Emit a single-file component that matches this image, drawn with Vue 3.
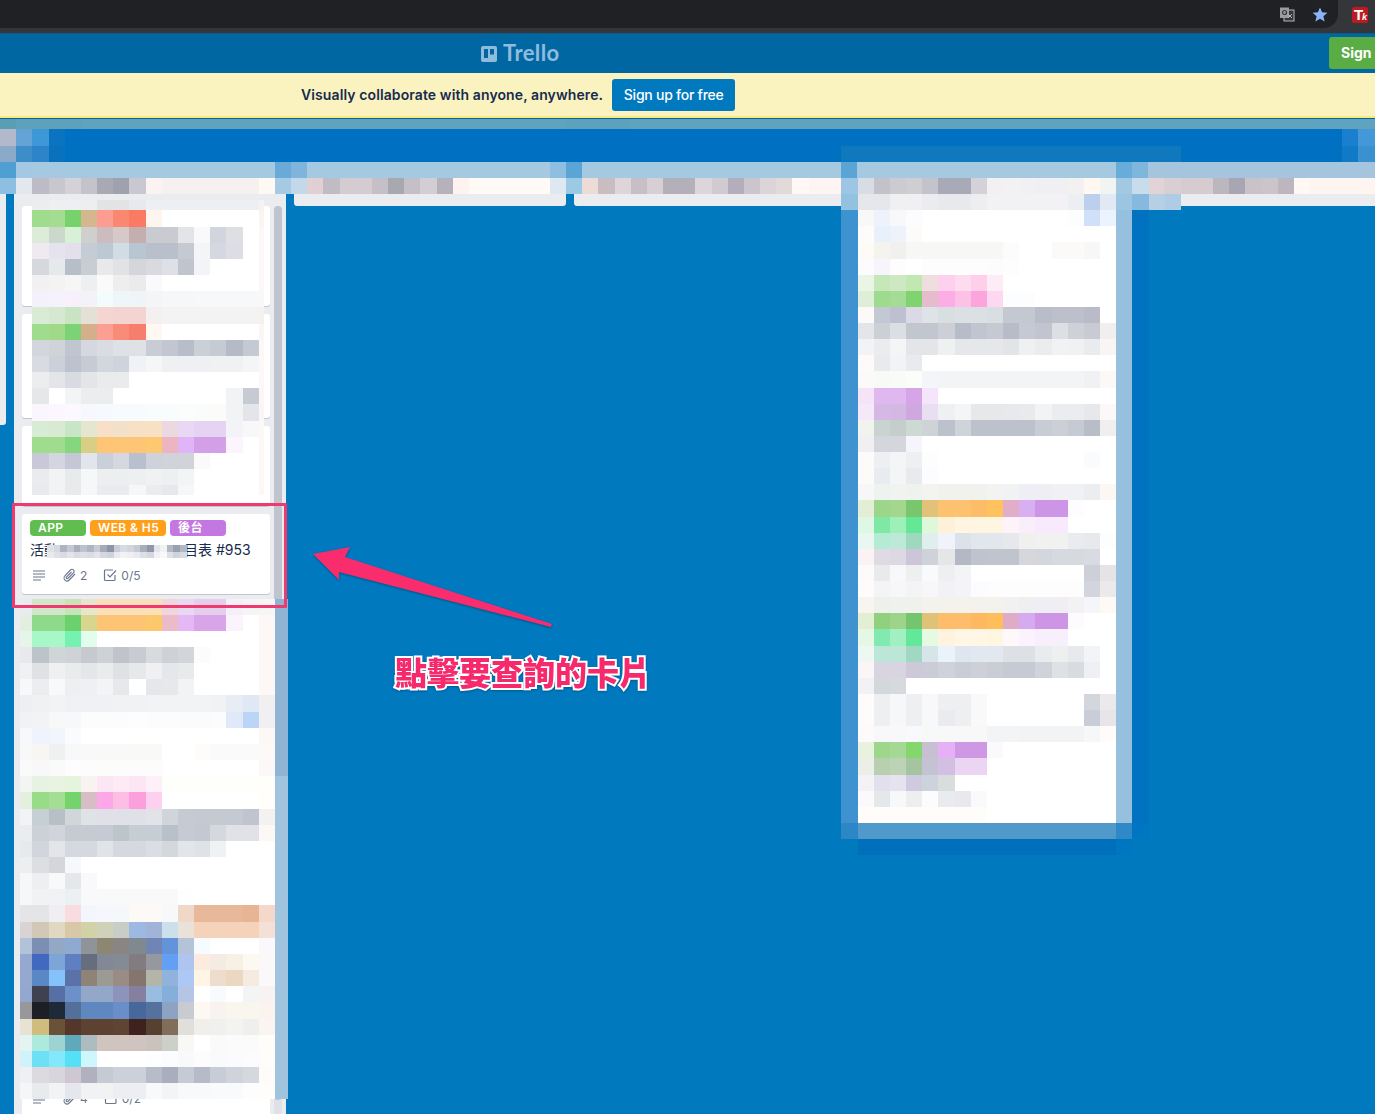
<template>
  <div class="page">
    <div class="chrome">
      <div class="omnibox">
        <svg class="ico-translate" width="16" height="15" viewBox="0 0 16 15">
          <rect x="5" y="3" width="10" height="11" fill="#35363a" stroke="#b4b6b8" stroke-width="1" />
          <rect x="1" y="0.5" width="9" height="10.5" fill="#9b9c9e" />
          <circle cx="5.5" cy="5.5" r="2" fill="none" stroke="#35363a" stroke-width="1.2" />
          <path d="M9 7l4 4M13 7l-4 4" stroke="#b4b6b8" stroke-width="1" />
        </svg>
        <svg width="16" height="15" viewBox="0 0 16 15">
          <polygon points="8,0.5 10.1,5.2 15.4,5.7 11.4,9.2 12.6,14.4 8,11.7 3.4,14.4 4.6,9.2 0.6,5.7 5.9,5.2" fill="#8ab4f8" />
        </svg>
      </div>
      <div class="ext-icon">T<span>k</span></div>
    </div>

    <header class="topbar">
      <div class="logo">
        <svg width="16" height="16" viewBox="0 0 16 16">
          <path fill-rule="evenodd" d="M2 0h12a2 2 0 0 1 2 2v12a2 2 0 0 1-2 2H2a2 2 0 0 1-2-2V2a2 2 0 0 1 2-2zm1 3v9h4V3H3zm6 0v5.500h4V3H9z" fill="#8fbcdc" />
        </svg>
        <span>Trello</span>
      </div>
      <button class="sign">Sign</button>
    </header>

    <div class="banner">
      <span class="banner-text">Visually collaborate with anyone, anywhere.</span>
      <button class="banner-btn">Sign up for free</button>
    </div>

    <main class="board">
      <section class="list list-prev"></section>

      <section class="list list-main">
        <div class="list-title"></div>
        <div class="cards">
          <div class="card" v-for="h in blankCards" :key="h" :style="{ height: h + 'px' }"></div>

          <div class="card card-open">
            <div class="labels">
              <span class="label green">APP</span>
              <span class="label orange">WEB &amp; H5</span>
              <span class="label purple">後台</span>
            </div>
            <div class="card-title">活動<span class="title-gap"></span>目表 #953</div>
            <div class="badges">
              <svg width="14" height="14" viewBox="0 0 14 14"><path d="M1 3h12M1 6h12M1 9h12M1 12h8" stroke="#6b778c" stroke-width="1.2" /></svg>
              <svg class="clip" width="14" height="14" viewBox="0 0 14 14"><path d="M13 6L7.200 12a3 3 0 0 1-4.300-4.200L8.500 2a2 2 0 0 1 2.900 2.800L5.800 10.500a1 1 0 0 1-1.400-1.400L9.500 4" fill="none" stroke="#6b778c" stroke-width="1.100" /></svg>
              <span class="num">2</span>
              <svg class="check" width="14" height="14" viewBox="0 0 14 14"><path d="M12 7v4.500a1 1 0 0 1-1 1H2.500a1 1 0 0 1-1-1V3a1 1 0 0 1 1-1H10" fill="none" stroke="#6b778c" stroke-width="1.200" /><path d="M4.500 6.500L7 9l6-6.500" fill="none" stroke="#6b778c" stroke-width="1.200" /></svg>
              <span class="num">0/5</span>
            </div>
          </div>

          <div class="card card-long">
            <div class="badges">
              <svg width="14" height="14" viewBox="0 0 14 14"><path d="M1 3h12M1 6h12M1 9h12M1 12h8" stroke="#6b778c" stroke-width="1.2" /></svg>
              <svg class="clip" width="14" height="14" viewBox="0 0 14 14"><path d="M13 6L7.200 12a3 3 0 0 1-4.300-4.200L8.500 2a2 2 0 0 1 2.900 2.800L5.800 10.500a1 1 0 0 1-1.400-1.400L9.500 4" fill="none" stroke="#6b778c" stroke-width="1.100" /></svg>
              <span class="num">4</span>
              <svg class="check" width="14" height="14" viewBox="0 0 14 14"><path d="M12 7v4.500a1 1 0 0 1-1 1H2.500a1 1 0 0 1-1-1V3a1 1 0 0 1 1-1H10" fill="none" stroke="#6b778c" stroke-width="1.200" /></svg>
              <span class="num">0/2</span>
            </div>
          </div>
        </div>
        <div class="scroll-track"><div class="scroll-thumb"></div></div>
      </section>

      <section class="list list-short"></section>
      <section class="list list-short"></section>
      <section class="list list-tall"></section>
      <section class="list list-short"></section>
    </main>

    <!-- pixelated parts of the screenshot -->
    <div
      v-for="(p, i) in patches"
      :key="i"
      class="mosaic"
      :style="{ left: p.x + 'px', top: p.y + 'px', gridTemplateColumns: p.columns, gridTemplateRows: p.heights }"
    >
      <i v-for="(c, k) in p.cells" :key="k" :style="{ background: '#' + c }"></i>
    </div>

    <!-- annotation drawn over the screenshot -->
    <div class="mark-box"></div>
    <svg class="mark-arrow" width="260" height="100" viewBox="0 0 260 100">
      <polygon points="3,24 40,17 35,27 242,94 241,97 29,42 29,50" fill="#f92c6d" />
    </svg>
    <div class="mark-text">點擊要查詢的卡片</div>
  </div>
</template>

<script setup>
const CELL = 16.18

const blankCards = [100, 104, 80]

const expand = (s) => s.split(' ').flatMap((t) => {
  const [c, n] = t.split('*')
  return Array(Number(n || 1)).fill(c)
})

const track = (n, first, last, size = CELL) => {
  const out = Array(n).fill(size)
  if (first) out[0] = first
  if (last) out[n - 1] = last
  return out.map((v) => v + 'px').join(' ')
}

const pad = (cells, n) => cells.concat(Array(Math.max(0, n - cells.length)).fill('fff'))

const topBand = [
  '5c9db6 5ea1bb*4 5fa3bc*30 5ca2bc*4 5fa3bc*40 5fa3bc*2 5ea3c0*4',
  'b3b9cc 63a3d5 3d98d8 0a74c0 0071c2*79 1a80cd 4498d8',
  '8aaac8 3d8dc8 2d84c8 0a72bc 0071c0*48 1078bc*21 0071c0*10 117ac6 3a91cf',
  '4f9fd2 a3c8e3 a5c9e1*15 6aaad8 7fb4dc a5c9e1*15 8fbfe0 5aa5d5 a5c9e1*16 5aa5d5 a5c9e1*16 68acd9 7fb6dc a5c5de*14',
  '8dc0e0 e3e7ee bdbcc6 c8c7cd d4d2d7 c4c3cb a9a9b6 a0a1ae c9c8d0 fbf3f1 f6f0ef*6 fff9f3 a5cbe4 c3d9ea e0d0d2 bfbcc4 d4ccd0 d4ccd0 c5c0c8 a8a8b0 c5c0c8 d2ced4 b5b2bb fef3ef fffaf6*5 dde8f2 9ccae5 eddbd6 c8bec2 ddd5d8 c8bfc6 d6d0d4 b4b0ba b4b0ba dcd6da d0cbd0 b2aebb cbc6cd dbd5d8 e2d9d9 fff8f5 fef5f2 fef5f2 9cc6e3 fff*16 a3c8e2 c9dceb e2d4d6 d8cfd3 d6ccd0 d6ccd0 bcb7bf a8a6b2 c9c2c9 cbc4c9 bcb7be fff8f4 fef5f1*4',
]

const leftUpper = [
  'ecedef eeeff1 eeeff1 eceef0 e3e3e6 e3e3e6 e8e9ec eeeff2*7 f5f3f2',
  'a0dc8e a4dc92 78d26c d5b78f fd9d92 fa8770 fb7a64 fff5ef fff*6 fbf5f2',
  'dcecd8 cbd9cc d8f0d5 cfd0cd cdbcbf d8c9c9 c5aeb0 c9cbd0 c9cbd0 e3e4e8 f9f9fb d2d5dd dddfe3 fff fdf8f7',
  'efeaf2 e5e3ee e3e0ec c6ccd6 bcc8d4 d0dde5 b8c6d2 b9bfcb b9bfcb c5c9d2 f4f5f7 d5d8e0 dcdee3 fff fdf8f7',
  'd5d9de e5e9eb b5bec9 c8cdd3 e9e9eb e1e2e5 d5d6dc d8dae0 dde0e7 bfc4ce f2f4f7 fff*3 fdf8f7',
  'f1f1f1 f3f3f3 f5f6f5 eeeff0 fafafb eeeeef ebebed fafafc fff*6 fdf8f7',
  'f5f1fa f6f2fb f7effa f2f2f8 f3fbfd eef6fa eef4f8 f4f5f7 f6f7f9 f6f7f9 f7f8f9*3 f7f8fa f8f8f9',
  'd8ebd5 d5e8d0 c8e4c3 e5e0d5 f5d5d0 f3d4d0 f3d4d0 f4f0ef f4f3f3 f3f3f3*5 f5f1ef',
  'a0dc8e a0da88 7bd375 d3b08b fd9e93 f98b79 f57e6d fff7f2 fff*6 fbf5f3',
  'd3d6dc d0d4d9 c0c5d0 d5d9df d9dce2 dee1e5 dee1e5 c8ccd5 c2c6d0 b8bdc9 cbd0d6 c5cad3 b4bbc6 c5cad2 fdf8f7',
  'd8dbe0 ccd0d8 bcc2ce c7cbd4 d2d6dd cfd3db f1f2f5 f5f6f7 eff0f2 eff0f3 eff0f3 f0f1f3 f0f1f3 f4f5f6 fdf8f7',
  'ecedef e3e5e8 d8dbe1 e3e5e8 e9ebed e9ebed fff*8 fdf8f7',
  'e6e7e9 fff f3f4f5 ecedee ecedee fff*7 f2f3f4 c6cbd3 fdf6f5',
  'fbf6fe fcf7fe fdf8ff f7f8fe f6f9fe f7fbfe f8fbfd f9fcfd f9fcfd fafdfc fafcfb fbfcfa f2f3f5 e3e5ea fbf6f5',
  'd8ebd5 d8ebd2 c8e5c5 e5e6d0 f8e0c8 f3e0c8 f8e0c5 f8e0c5 ecd8e0 e8d8f3 e6d2f2 e6d2f2 f3f3f8 f8f8fa fbf8f5',
  'a0dc8e a0dc8e 85d67c d8cf85 fdc575 fdc575 fdc575 fdc870 ecb5c0 e0b5f8 d3a0e8 d3a0e8 fcf5fe fff fdf8f5',
  'c8c8d8 d3d5df c5c7d6 e2e6ec cad0da d5d9df b8c0cf cfd2da d0d3da d0d4da fafafa fff*3 fdf8f5',
  'eaebee f2f3f5 e9eaec f6f7f8 edeef0 edeef0 eeeff1 f0f1f3 eeeff1 f3f4f5 fff*4 fdf8f5',
  'e9eaed f2f3f5 e9eaec f6f7f8 eaebee eaebee f6f7f8 eaecee e7e8eb f6f7f8 fff*4 fdf8f5',
]

const leftLower = [
  'e9ecef d2e6c8 d2e6c8 c8e3b8 e8e6c8 fbdfb8*4 f0d5dc e8d8f2 e5cdee e5cdee f5f0f8 f5f5f8 f8f5f5',
  'e2efe0 8fd98a 8fd98a 6bd16f d8d68e fdc475*3 fdc86c ebbcc7 e3b8f5 d8a5e8 d8a5e8 fbf3fd fff fdf8f5',
  'e5f5ea a7f7c9 a7f7c9 76f2b0 e2fcee fff*10 fdf8f5',
  'e7e9ec bcc3c9 d0d5d8 cfd3d7 c6cacf ced2d6 c0c4ca c8ccd2 d8dbde ced2d7 d2d5d9 fcfcfd fff*3 fdf8f5',
  'f0f1f3 dfe1e4 eff0f2 e9ebed e4e6e9 e9ebed dfe1e5 e6e8ea f0f0f2 e5e7ea e8eaec fff*4 fdf8f5',
  'f7f8f9 ebedef f8f9fa eeeff1 eff0f2 f3f4f5 e6e8ea fff e6e7ea e6e8ea f2f3f4 fff*4 fdf8f5',
  'eeeff2 f0f1f3 f2f3f4 f0f1f4 f0f1f4 f0f1f4 f1f2f4 f1f2f4 f2f3f5*4 f1f2f4 e8edf5 dfe8f5 f2eff0',
  'f1f2f4 f2f3f4 f7f8f8 f7f8fa fcfcfd*3 fdfdfd fcfcfc fcfcfc fbfbfb fbfbfc fcfcfc dfe9f8 bcd4f5 f0f0f3',
  'f7f8fb eef3fd f2f5fc fafbfc fff*11 fdf8f5',
  'f8f8f8 f8f6f2 eff0f2 f8f8f8 f9f9f9*3 f9f9f8 f9f9f8 fff fff fdfcfb fbfafa*3 fdf9f7',
  'fafafa f9f8f9 fbfafb fdfcfe fbfcfb fcfcfb fcfcfb fbfcfb fbfcfb fff*6 fdf8f8',
  'f3f5f2 e6f3e2 e8f3e2 e5f5dd f8f2f1 fde6f3 fdeaf5 fde6f3 fef0f8 fefefb*7',
  'e3f0dd 98dc88 a3de94 74d36a d9bdc6 fda6e8 fcbee3 fd9fdc fdd0ef fff*6 fffefa',
  'f2f3f7 c6cfd2 b7bfc7 d0d6da dfe2e6 e0e0e8*3 e2e3e8 cfd5da c5cad3 c5c9d2*3 bfc4ce f4f1f1',
  'eaecef ccd0d7 d2d4dc c6cbd3*3 bcc5cc c7cdd5 c7cdd5 bac0ca c5cad3 c3c8d1 d5d8de e0e2e7 e0e2e7 fcf8f5',
  'e7eaed d2d5dc e3e5e9 d5d8df d5d8df e0e3e8 d5d8df d5d8df dadde3 d2d8dc e2e5e9 dfe2e6 f0f1f3 fff*3',
  'eceef0 dcdee2 d5d6dc f7f8fb fff*12',
  'f6f7f8 eeeff1 f8f9fa e5e7eb f9f9fc fff*11',
  'f6f7f8 f1f2f4 f1f2f4 edf0f3 f9f9fa*6 fdfeff fff*5',
  'e5e5e8 e3e5e7 f0eef2 f8dce0 f3f6fd f5f7fc f6f7fb fcf9f7 fcf9f6 f7f8f9 efd8c8 e8b89a*3 e8b594 f5d8ca',
  'd9d3d3 d2c8b8 e0d8c0 d8c8a8 d3d1a8 cfd1b8 c8cdc8 9db8e2 a0b3d8 cce0ec e8e2d8 f5d3bb*4 f5e0d8',
  'b2c2d8 7d8eb5 92a8c5 8faad0 8f9499 8d8673 888584 808890 7185b5 6393d8 b5c3d8 f5fbff fff*3 faf8fb',
  '96a8d0 4169c0 7ea5d8 5f7fc2 666d7d 828896 858b95 827c80 95989e 63a0f5 afc5ef fdebe0 f5ebe5 f7f0e5 fdf9f0 fbf8fa',
  '95a8d0 5a88c5 85c2fb 5b72a8 8f8378 9c9a94 9a8b85 85756f b5b4a8 90b2dd aec8f5 fff5e5 eeddcd ebd8c2 f5ebe0 fbf8fa',
  '93a8cf 3f4050 566fa5 6e90c8 93a8c8 93a8c8 8c94bc 8580a0 98bddf 85aedb b5c5e5 fffffd f8fbfe fff f3f4f6 f8f3f2',
  '98989c 1c2026 1e2a38 53709a 6088c0 6088c0 6a8fc8 46689a 55729f 8ea3c3 c8ccd0 fdf9f2 f8f3f0 f9f6ee f9f6ee fbf3ee',
  'e8e2d2 d0bc7c 695238 54372a 5d4232 5d4232 604433 3f221e 564030 806e5a e2dfda f0efec f0f0ee f3f3f0 eff0ee fbf5f2',
  'e2f5f2 aceade 9dd3d3 60a9bb adbdbf d0c4bf cfc4bf cfc4bf c9c2bd cdd0c8 f8f8f5 fff fafafa fbfbfc fbfbfc fffdf9',
  'd0f2fa 6ee0f5 84e8fb 55e0f8 cdf7fd fff fff fff fdfeff fbfcfd f8f9fb fcfcfd f9fafc fbfbfd fcfcfe fffdf9',
  'f0f0f4 dcd9df d8d6dc cfc8d2 b0b0bf c5cad3 ccd0d8 ccd0d8 b8bcc8 a8aebd c5cad3 b5bbc8 c8ccd5 d0d3dc d5d8df fefcf8',
  'f5f6f8 e8eaee f2f3f5 e5e7ec f1f2f4 f1f2f4 edeef1 edeef1 f8f9fa f3f4f6 f8f9fa f8f9fa f9fafb f9fafb fdfdfd fefdfb',
]

const rightPanel = [
  'd8dde5 c3c2ca cccbd2 cfcfd3 c3c3cb a9aab8 a9aab8 d2d2d8 f2f0f1 f2f2f3 f1f1f3 f0f0f2 f0f0f2 f3f0f0 fff8f0 f0f5f2',
  'e6e7ea e6e7ea f0f0f2 f0f0f2 ebecef e8e9ec e8e9ec eeeef0 f2f2f4*5 ebeef3 bcd0ee e3e8f5',
  'f9f8f9 eef3fb f8f8fb fcfcfe fff*9 fbfdff cfe0f8 eaf3fe',
  'fdfcfb e8f0fc eef3fb fdfbfa',
  'fefaf5 f5f3ee f0f1ee f7f7f6*6 fcfcfc fff fff fbfaf8 fbfaf8 f6f7f6 fff',
  'fdfbfe f7f4fc fefdfe fff fcfdfc*4 fbfcfb fdfdfd',
  'eaf5e5 c5e8b8 cee8c2 c0e8b0 f0dde0 fdd0ed fddcf0 fdcfeb fdebf5',
  'deefd8 9fdb8e a5dc95 80d46f e5bccb fdade5 fcc2e6 fca5dc fed8f0 fcfdfe fdfdfe',
  'fdf9f9 c3c8d5 bcc0d0 dcd8e5 dde3e7 d8dfe1 dae0e3 dae0e3 d8dee1 c3c8d1 c3c8d1 b9bdc9 bdc0cb bdc0cb b9bcc8 fff',
  'e3e5e9 cbd0d6 dbdee2 c2c7cf c2c7cf ccd0d6 b6bcc8 c1c5cf c6c9d1 b8bcc9 c6c9d3 c2c5d0 dcdfe3 ced2d8 c8cbd3 f1eeee',
  'f2f3f4 ebecef f4f5f7 e3e5e8 e3e5e8 eff0f2 e6e7ea e6e7ea e6e7ea e2e4e7 eff0f2 ebecee f1f2f4 f0f1f3 e9ebee f8f5f4',
  'fefafa e9eaed f3f3f6 e9eaee',
  'fbfaf8 f7faf6 f8fbf7 fbfdf9 f4f5f8 f3f4f6*9 f0f1f4 fcf8f6',
  'f5e3f8 e0b8f0 e0b8f0 d5a5e8 f5e5fb',
  'f5e8f8 d5b8e3 d3b8e3 cfa8df e8e0f2 eff0f2 f4f5f6 e6e8ea e6e8ea e7e9ec e8eaec f2f3f5 ebecef ebecef e6e8ec fdf8f8',
  'f1f3ef c9d3d0 c5cecb ccdad3 ced3d5 bcc2cc cfd4da bcc1cc*4 c8ccd4 ccd0d6 c6cad3 b8bdc8 f0eeee',
  'f0f0f2 d4d6dd d4d6dd f6f5fb',
  'fdfafa eeeff2 f4f5f6 eeeff1 fdfdfd fff*9 fafbfc fff',
  'fdfafa e8ebf0 f4f5f6 e8eaee fcfcfe',
  'f7f7f7 eff3ef f0f3ef eff3ee f3f3f0 f1f1ee*3 f3f3f2 f1f2f4 eeeef4 eeeef4 f0f0f5 f0f1f5 ebedf1 fcf7f3',
  'e3efd5 9dd68a a3d68f 78c76e e2c278 fdc26f fdc26f fdbd66 ffc25f e2adc8 d8aff0 cd95e5 cd95e5 fefcfe',
  'dff7e5 80e8a5 9df0b8 64e895 e0f8da fff0da fff5e0*3 fdf3f8 f8effb f8eafc f8eafc',
  'e8f7f0 b5ead5 bdead8 9dd8bf e0eeee f0f3f9 dce2ea e2e7ee e2e7ee e6e8eb f0f1ef f0f1f0 f1f2f0 e9ebee e7e9ec fefdfd',
  'fbf3f3 e0dae5 ded8e5 cdc5d8 d0d2d9 e5e6e8 b3b9c4 bfc3cd c0c4cc c0c4cc d5d7dc d3d6dc d6d9df d6d9dd d8dce2 fff',
  'fdfbfa e8eaeb f7f8f9 eeefef f9fafb eeeff0 f3f4f5 fff*7 cdd0d9 e5e3e5',
  'fdfbfb f4f4f7 f7f7fa f4f4f7 f7f7fa f2f2f6 f4f4f8 fcfcfe fdfdfe*6 d2d5de ebe9ea',
  'f8f4f0 eef0ec eff1ec eff1ec f3f2ec f4f2ec f5f2ec f4f2ec f4f2ec f1f1f1 efeff2 eeeef4 f0eef2 f2f2f4 f4f6f9 fff9f5',
  'e2efd3 90d07e 9dd48a 75c56f dec278 fdbd6a fdbd6a fdb860 ffbe5c dfacc8 d6aaf0 cf95e5 cf95e5 fefbfe',
  'e5f8e3 82eab0 a0f0c2 62e898 e5fae0 fff2de fff6e5 fff6e5 fff6e2 fff8fb faf3fd f8effc f8effc',
  'eef8f3 bce6d8 bce6d8 a0d8c3 d5e5e8 eaf3fb dfe6ef e2e8f0 e3e8f0 dde1e5 dde1e5 e8ecee eef0f0 e8e9ec f3f4f7 fff',
  'fbf5f5 d8d5e0 d8d5e0 cdc9d8 cacdd7 cfd2da c9cdd5 cdd0d7 c9cdd5 c6cad3 c6cad3 d0d3da dfe2e5 d8dbe0 eef0f3 fff',
  'f2f2f4 d3d8dc d6dade',
  'fefbfb eeeff1 f6f7f8 eeeff1 f8f8fa eeeff1 eeeff1 f9f9fa fff*6 d3d6dd ebe9eb',
  'fefbfb eeeff1 f6f7f8 eeeff1 f8f8fa eaebee eeeff1 f9f9fa fff*6 c9cdd8 e7e5e7',
  'fcfafa f8f8fb f8f8fb f9f8fc f7f8f8 f8f8f8*3 f3f4f6 f3f4f6 f2f3f5*4 f6f7f9 fffbf8',
  'e8f2dc 9ed68c a5d895 84d76d c9bfd5 e5b0f5 cf98e5 cf98e5 fbf9fb',
  'ebefe8 b8d0b0 bcd3b5 a5c4a0 c3c3d3 d3bfe3 ebd5f2 ebd5f2',
  'f5f2f6 e3e0ee e6e3ef cfcae0 ccd3da d8dedd',
  'fbf9fb e5e8ea f6f8f9 ecefee fbfcfd e9ebee e7e9ec fafafc',
  'fffcf9*7 fffdfa',
]

const sideLeft = (i) => (i === 0 ? '9cc6e3' : i === 1 ? '93c2e0' : '3f92d0')
const sideRight = (i) => (i === 0 ? 'a3c8e2' : i === 1 ? '9cc5e2' : '96c0de')
const sideFar = (i) => (i === 0 ? 'c9dceb' : i === 1 ? '85bade' : '0072c0')

const patches = [
  {
    x: 0,
    y: 119,
    columns: track(85),
    heights: '10.45px 16.18px 16.18px 16.18px 16.18px',
    cells: topBand.flatMap(expand),
  },
  {
    x: 32.36,
    y: 200,
    columns: track(15, 0, 5),
    heights: track(19, 10.34, 9.6),
    cells: leftUpper.flatMap((r) => pad(expand(r), 15)),
  },
  {
    x: 20,
    y: 598.5,
    columns: track(17, 12.36, 13),
    heights: track(31, 0, 0, 16.17),
    cells: leftLower.flatMap((r, i) => pad(expand(r), 16).concat(i < 11 ? '8fb4d4' : 'a0c3de')),
  },
  {
    x: 841.36,
    y: 177.98,
    columns: track(19),
    heights: track(42, 0, 0, 16.13),
    cells: rightPanel
      .flatMap((r, i) => [sideLeft(i), ...pad(expand(r), 16), sideRight(i), sideFar(i)])
      .concat(expand('2d86c6 4f9acb*16 2f89c8 0075c2'), expand('0079bf 0070bc*16 0075c0 0079bf')),
  },
  {
    x: 1148.78,
    y: 194.16,
    columns: track(2),
    heights: track(1),
    cells: ['b5d0e5', 'aecce5'],
  },
  {
    x: 47,
    y: 545,
    columns: 'repeat(21, 6.67px)',
    heights: '7px 6px',
    cells: expand('dfe1e6 d5d8df aeb4c2 c4c8d2 a9afbe bdc2cd aeb4c1 c6cad3 a4abba 8d95a8 c9ccd6 d8dbe1 d2d5dc c5c9d2 a7aebc 8f97a9 e3e5ea f1f2f4 b3b8c5 98a0b2 b3b8c5 e8eaee dfe1e6 d8dbe1 e2e4e8 d8dbe1 dde0e5 dadde2 e2e4e8 d5d8de d0d3da e8eaee f1f2f4 eeeff2 e8eaee dcdfe4 d5d8de f1f2f4 f8f8fa dee0e5 d0d3da d8dbe1'),
  },
]
</script>

<style scoped>
.page {
  position: relative;
  width: 1375px;
  height: 1114px;
  overflow: hidden;
  background: #0079bf;
  font-family: Inter, "Noto Sans CJK TC", sans-serif;
  color: #172b4d;
}

.chrome {
  height: 33px;
  background: #35363a;
  display: flex;
  align-items: flex-start;
}

.omnibox {
  width: 1338px;
  height: 28px;
  background: #202124;
  border-radius: 0 0 14px 0;
  display: flex;
  justify-content: flex-end;
  align-items: center;
  gap: 17px;
  padding-right: 10px;
  box-sizing: border-box;
}

.ext-icon {
  width: 16px;
  height: 16px;
  margin: 7px 0 0 14px;
  background: #bb1a20;
  border-radius: 2px;
  color: #fff;
  font: bold 15px/16px "Liberation Sans", sans-serif;
  text-align: center;
  letter-spacing: -1px;
}

.ext-icon span {
  font-size: 9px;
  font-style: italic;
}

.topbar {
  height: 40px;
  background: #0067a3;
  display: flex;
  align-items: center;
  padding-left: 481px;
  box-sizing: border-box;
  border-top: 1px solid #075d90;
}

.logo {
  display: flex;
  align-items: center;
  gap: 6px;
  color: #8fbcdc;
  font: bold 22px/24px Lato, sans-serif;
  letter-spacing: 0.4px;
}

.logo span {
  margin-top: -2px;
}

.sign {
  margin-left: auto;
  margin-right: -34px;
  flex: none;
  width: 80px;
  height: 32px;
  margin-top: -2px;
  border: 0;
  border-radius: 3px;
  background: #5aac44;
  color: #fff;
  font: bold 14px Inter, sans-serif;
  text-align: left;
  padding-left: 12px;
}

.banner {
  height: 46px;
  box-sizing: border-box;
  background: #faf3c0;
  border-bottom: 1px solid #0067a3;
  box-shadow: inset 0 -2px 0 #fbe87e;
  display: flex;
  align-items: center;
  padding: 0 0 2px 301px;
  gap: 9px;
}

.banner-text {
  font-size: 14px;
  font-weight: 600;
  letter-spacing: 0.1px;
  white-space: nowrap;
}

.banner-btn {
  width: 123px;
  height: 32px;
  border: 0;
  border-radius: 3px;
  background: #0079bf;
  color: #fff;
  font: 500 14px Inter, sans-serif;
  letter-spacing: -0.25px;
}

.board {
  display: flex;
  gap: 8px;
  align-items: flex-start;
  margin-left: -266px;
  padding-top: 46px;
}

.list {
  flex: none;
  width: 272px;
  background: #ebecf0;
  border-radius: 3px;
}

.list-prev {
  height: 260px;
}

.list-short {
  height: 41px;
}

.list-tall {
  height: 660px;
}

.list-main {
  position: relative;
  height: 960px;
  box-sizing: border-box;
  padding: 0 16px 0 8px;
}

.list-title {
  height: 41px;
}

.cards {
  display: flex;
  flex-direction: column;
  gap: 8px;
}

.card {
  background: #fff;
  border-radius: 3px;
  box-shadow: 0 1px 0 #c1c7d0;
  box-sizing: border-box;
}

.card-open {
  height: 80px;
  padding: 6px 8px 0;
}

.card-long {
  height: 520px;
  display: flex;
  flex-direction: column;
  justify-content: flex-end;
  padding: 0 8px 14px;
}

.labels {
  display: flex;
  gap: 4px;
}

.label {
  width: 56px;
  height: 16px;
  border-radius: 4px;
  color: #fff;
  font-size: 12px;
  font-weight: 600;
  line-height: 16px;
  padding-left: 8px;
  box-sizing: border-box;
  letter-spacing: 0.4px;
  white-space: nowrap;
}

.green {
  background: #61bd4f;
}

.orange {
  width: 76px;
  background: #ff9f1a;
}

.purple {
  background: #c377e0;
}

.card-title {
  margin-top: 4px;
  height: 20px;
  font-size: 14px;
  line-height: 20px;
  white-space: nowrap;
}

.title-gap {
  display: inline-block;
  width: 126px;
}

.badges {
  display: flex;
  align-items: center;
  height: 20px;
  margin-top: 5px;
  padding-left: 2px;
  color: #6b778c;
  font-size: 12px;
}

.clip {
  margin-left: 16px;
}

.check {
  margin-left: 16px;
}

.num {
  margin-left: 4px;
}

.scroll-track {
  position: absolute;
  left: 260px;
  top: 41px;
  width: 8px;
  height: 920px;
  background: #dfe1e6;
  border-radius: 4px;
}

.scroll-thumb {
  height: 894px;
  background: #bfc4ce;
  border-radius: 4px;
}

.mosaic {
  position: absolute;
  display: grid;
}

.mosaic i {
  display: block;
}

.mark-box {
  position: absolute;
  left: 12px;
  top: 503px;
  width: 275px;
  height: 105px;
  box-sizing: border-box;
  border: 3px solid #ef3a6f;
  border-radius: 1px;
}

.mark-arrow {
  position: absolute;
  left: 310px;
  top: 530px;
  filter: drop-shadow(0 1px 1px rgba(0, 0, 0, 0.3));
}

.mark-text {
  position: absolute;
  left: 395px;
  top: 648px;
  font-family: "Noto Sans CJK TC", sans-serif;
  font-size: 32px;
  font-weight: 900;
  line-height: 46px;
  white-space: nowrap;
  color: #f5296b;
  -webkit-text-stroke: 4px #fff;
  paint-order: stroke fill;
  filter: drop-shadow(0 1px 1px rgba(0, 0, 0, 0.25));
}
</style>

<style>
html,
body {
  margin: 0;
  background: #0079bf;
}
</style>
